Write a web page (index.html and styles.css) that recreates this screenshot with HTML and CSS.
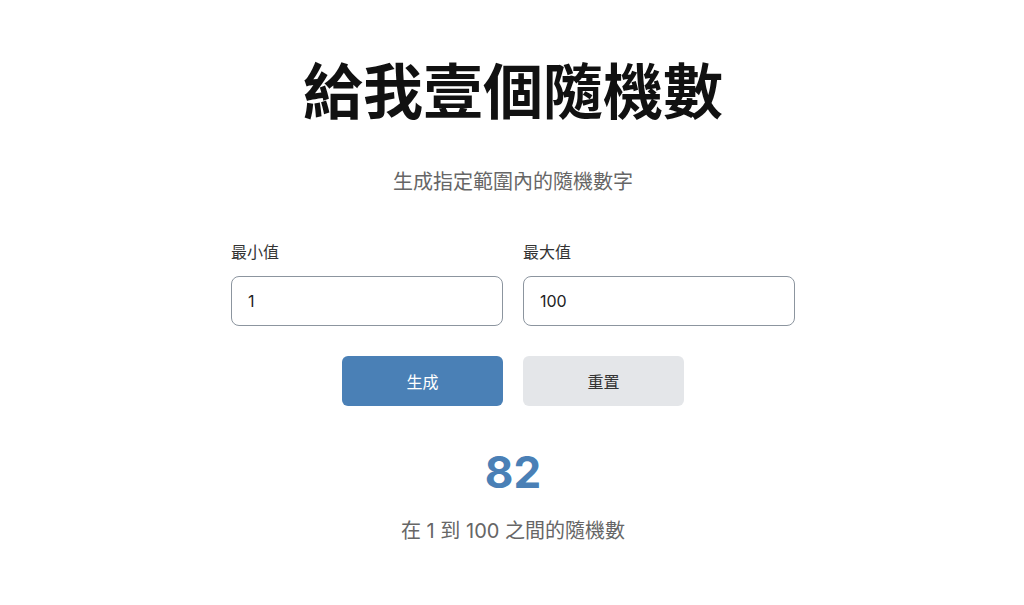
FILE: index.html
```html
<!DOCTYPE html>
<html lang="zh-Hant">
<head>
    <meta charset="UTF-8">
    <meta name="viewport" content="width=device-width, initial-scale=1.0">
    <title>給我壹個隨機數</title>
    <link rel="stylesheet" href="styles.css">
</head>
<body>
    <div id="app">
        <h1>給我壹個隨機數</h1>
        <p class="subtitle">生成指定範圍內的隨機數字</p>

        <div class="fields">
            <div class="input-group">
                <label for="min">最小值</label>
                <input type="number" id="min" value="1">
            </div>
            <div class="input-group">
                <label for="max">最大值</label>
                <input type="number" id="max" value="100">
            </div>
        </div>

        <div class="actions">
            <button class="btn primary">生成</button>
            <button class="btn secondary">重置</button>
        </div>

        <div class="result">82</div>
        <p class="result-note">在 1 到 100 之間的隨機數</p>
    </div>
</body>
</html>
```

FILE: styles.css
```css
body {
    margin: 0;
    padding-left: 2px;
    background: #ffffff;
    font-family: Inter, "Noto Sans CJK TC", sans-serif;
    color: #222;
}

#app {
    width: 564px;
    margin: 0 auto;
    padding-top: 56px;
    text-align: center;
}

h1 {
    margin: 0;
    font-size: 60px;
    line-height: 72px;
    font-weight: 700;
    color: #111;
}

.subtitle {
    margin: 40px 0 0;
    font-size: 20px;
    line-height: 28px;
    color: #666;
}

.fields {
    display: flex;
    gap: 20px;
    margin-top: 44px;
    text-align: left;
}

.input-group { flex: 1; }

.input-group label {
    display: block;
    font-size: 16px;
    line-height: 24px;
    color: #333;
    margin-bottom: 12px;
}

.input-group input {
    width: 100%;
    height: 50px;
    box-sizing: border-box;
    padding: 0 16px;
    border: 1px solid #8c959f;
    border-radius: 8px;
    font-family: inherit;
    font-size: 16px;
    color: #222;
    -moz-appearance: textfield;
}

.input-group input::-webkit-outer-spin-button,
.input-group input::-webkit-inner-spin-button {
    -webkit-appearance: none;
    margin: 0;
}

.actions {
    display: flex;
    justify-content: center;
    gap: 20px;
    margin-top: 30px;
}

.btn {
    width: 161px;
    height: 50px;
    border: none;
    border-radius: 6px;
    font-family: inherit;
    font-size: 16px;
    cursor: pointer;
}

.primary { background: #4a80b6; color: #fff; }
.secondary { background: #e4e6e9; color: #333; }

.result {
    margin-top: 40px;
    font-size: 44px;
    line-height: 53px;
    font-weight: 700;
    color: #4a80b6;
}

.result-note {
    margin: 19px 0 0;
    font-size: 20px;
    line-height: 27px;
    color: #666;
}
```
